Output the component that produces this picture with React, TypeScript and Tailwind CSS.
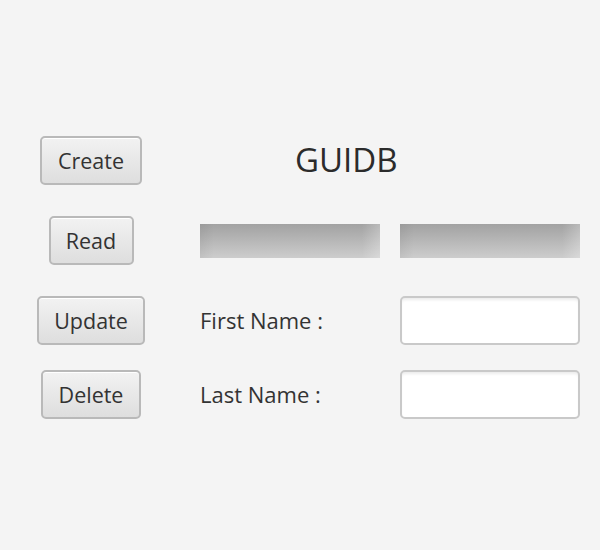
import React from "react";

const font = { fontFamily: '"Open Sans", "Noto Sans", sans-serif' };

function Btn({ label, w }: { label: string; w: string }) {
  return (
    <button
      className={`h-[49px] ${w} rounded-[5px] border-2 border-[#b9b9b9] bg-gradient-to-b from-[#f2f2f2] to-[#dedede] text-[21.5px] text-[#333333] leading-none shadow-[inset_0_1px_0_#ffffff]`}
      style={font}
    >
      {label}
    </button>
  );
}

function Field() {
  return (
    <div className="h-[49px] w-[180px] rounded-[5px] border-2 border-[#c9c9c9] bg-white shadow-[inset_0_3px_3px_-1px_rgba(0,0,0,0.08)]" />
  );
}

function Bar() {
  return (
    <div className="relative h-[34px] w-[180px] bg-gradient-to-b from-[#a2a2a2] to-[#cdcdcd] overflow-hidden">
      <div className="absolute inset-y-0 left-0 w-[14px] bg-gradient-to-r from-[rgba(0,0,0,0.05)] to-transparent" />
      <div className="absolute inset-y-0 right-0 w-[18px] bg-gradient-to-l from-[rgba(255,255,255,0.25)] to-transparent" />
    </div>
  );
}

export default function App() {
  return (
    <div className="w-[600px] h-[550px] bg-[#f4f4f4] pt-[136px] text-[#333333]" style={font}>
      <div className="flex h-[49px] items-center">
        <div className="w-[182px] flex justify-center">
          <Btn label="Create" w="w-[102px]" />
        </div>
        <div className="ml-[113px]">
          <span className="text-[33px] leading-none text-[#2b2b2b]">GUIDB</span>
        </div>
      </div>
      <div className="flex h-[49px] items-center mt-[31px]">
        <div className="w-[182px] flex justify-center">
          <Btn label="Read" w="w-[85px]" />
        </div>
        <div className="ml-[18px]">
          <Bar />
        </div>
        <div className="ml-[20px]">
          <Bar />
        </div>
      </div>
      <div className="flex h-[49px] items-center mt-[31px]">
        <div className="w-[182px] flex justify-center">
          <Btn label="Update" w="w-[108px]" />
        </div>
        <div className="ml-[18px] w-[180px] text-[22px]">First Name :</div>
        <div className="ml-[20px]">
          <Field />
        </div>
      </div>
      <div className="flex h-[49px] items-center mt-[25px]">
        <div className="w-[182px] flex justify-center">
          <Btn label="Delete" w="w-[100px]" />
        </div>
        <div className="ml-[18px] w-[180px] text-[22px]">Last Name :</div>
        <div className="ml-[20px]">
          <Field />
        </div>
      </div>
    </div>
  );
}
